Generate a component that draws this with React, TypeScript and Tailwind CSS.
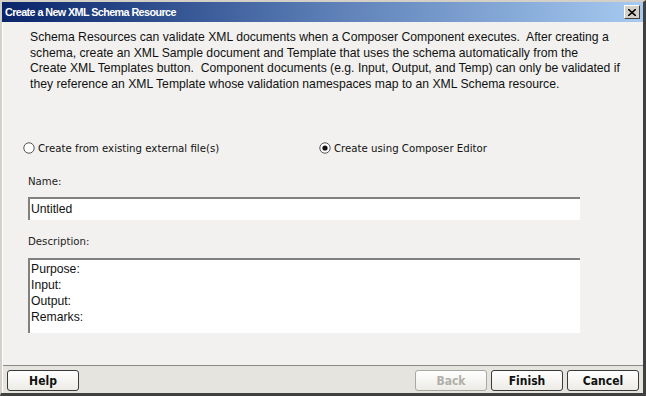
import React from "react";

function Radio({ checked, label }: { checked?: boolean; label: string }) {
  return (
    <div className="flex items-center gap-[3px] h-[13px]">
      <svg width="12" height="12" viewBox="0 0 12 12">
        <circle cx="6" cy="6" r="5.2" fill="#fff" stroke="#555" strokeWidth="1" />
        {checked && <circle cx="6" cy="6" r="2.6" fill="#111" />}
      </svg>
      <span className="text-[10.2px] leading-[13px] text-[#111] whitespace-nowrap" style={{ fontFamily: '"DejaVu Sans", sans-serif' }}>
        {label}
      </span>
    </div>
  );
}

function Btn({ label, disabled }: { label: string; disabled?: boolean }) {
  return (
    <div
      className={`w-[72px] h-[21px] flex items-center justify-center rounded-[3px] border ${
        disabled ? "border-[#a8a8a0] text-[#b0b0a8]" : "border-[#3a3a3a] text-[#111]"
      } bg-gradient-to-b from-[#ffffff] to-[#ecebe6] text-[12px] font-bold`}
      style={{ fontFamily: '"DejaVu Sans Condensed", "DejaVu Sans", sans-serif' }}
    >
      {label}
    </div>
  );
}

export default function App() {
  const arial = { fontFamily: '"Liberation Sans", Arial, sans-serif' };
  const dv = { fontFamily: '"DejaVu Sans", sans-serif' };
  return (
    <div className="w-[646px] h-[396px] bg-[#d4d0c8] flex flex-col border-l border-l-[#d4d0c8] border-r-[3px] border-r-[#404040] border-b-[3px] border-b-[#404040] border-t-2 border-t-[#d4d0c8] overflow-hidden">
      <div className="h-[20px] shrink-0 ml-[1px] flex items-center justify-between pl-[3px] pr-[3px] bg-gradient-to-r from-[#0a246a] via-[#5b7db5] to-[#a6caf0]">
        <span className="text-white text-[10.8px] font-bold tracking-[-0.6px]" style={arial}>
          Create a New XML Schema Resource
        </span>
        <div className="w-[16px] h-[14px] bg-[#d4d0c8] border border-t-white border-l-white border-r-[#404040] border-b-[#404040] flex items-center justify-center">
          <svg width="8" height="7" viewBox="0 0 8 7">
            <path d="M0 0 L8 7 M8 0 L0 7" stroke="#000" strokeWidth="1.6" />
          </svg>
        </div>
      </div>
      <div className="flex-1 bg-[#f2f1ef] ml-[1px] border-l border-l-[#ffffff] flex flex-col">
        <div className="pl-[27px] pt-[8px] text-[12.2px] leading-[15.7px] text-[#111] whitespace-nowrap" style={arial}>
          Schema Resources can validate XML documents when a Composer Component executes.&nbsp; After creating a
          <br />
          schema, create an XML Sample document and Template that uses the schema automatically from the
          <br />
          Create XML Templates button.&nbsp; Component documents (e.g. Input, Output, and Temp) can only be validated if
          <br />
          they reference an XML Template whose validation namespaces map to an XML Schema resource.
        </div>
        <div className="flex mt-[49px] pl-[20px]">
          <div className="w-[296px]">
            <Radio label="Create from existing external file(s)" />
          </div>
          <Radio checked label="Create using Composer Editor" />
        </div>
        <div className="pl-[25px] mt-[20px] text-[10.2px] leading-[13px] text-[#222]" style={dv}>
          Name:
        </div>
        <div className="ml-[25px] mt-[9px] w-[552px] h-[23px] shrink-0 bg-white border-t-2 border-l-2 border-t-[#808080] border-l-[#808080] text-[12.2px] text-[#111] pl-[1px] leading-[20px]" style={arial}>
          Untitled
        </div>
        <div className="pl-[25px] mt-[15px] text-[10.2px] leading-[13px] text-[#222]" style={dv}>
          Description:
        </div>
        <div className="ml-[25px] mt-[10px] w-[552px] h-[75px] shrink-0 bg-white border-t-2 border-l-2 border-t-[#808080] border-l-[#808080] text-[12.2px] leading-[16px] text-[#111] pl-[1px] pt-[1px]" style={arial}>
          Purpose:
          <br />
          Input:
          <br />
          Output:
          <br />
          Remarks:
        </div>
        <div className="flex-1" />
        <div className="h-[28px] shrink-0 bg-[#e5e4df] border-t border-t-[#8a8a86] flex items-start pt-[4px] px-[4px] gap-[4px]">
          <Btn label="Help" />
          <div className="flex-1" />
          <Btn label="Back" disabled />
          <Btn label="Finish" />
          <Btn label="Cancel" />
        </div>
      </div>
    </div>
  );
}
